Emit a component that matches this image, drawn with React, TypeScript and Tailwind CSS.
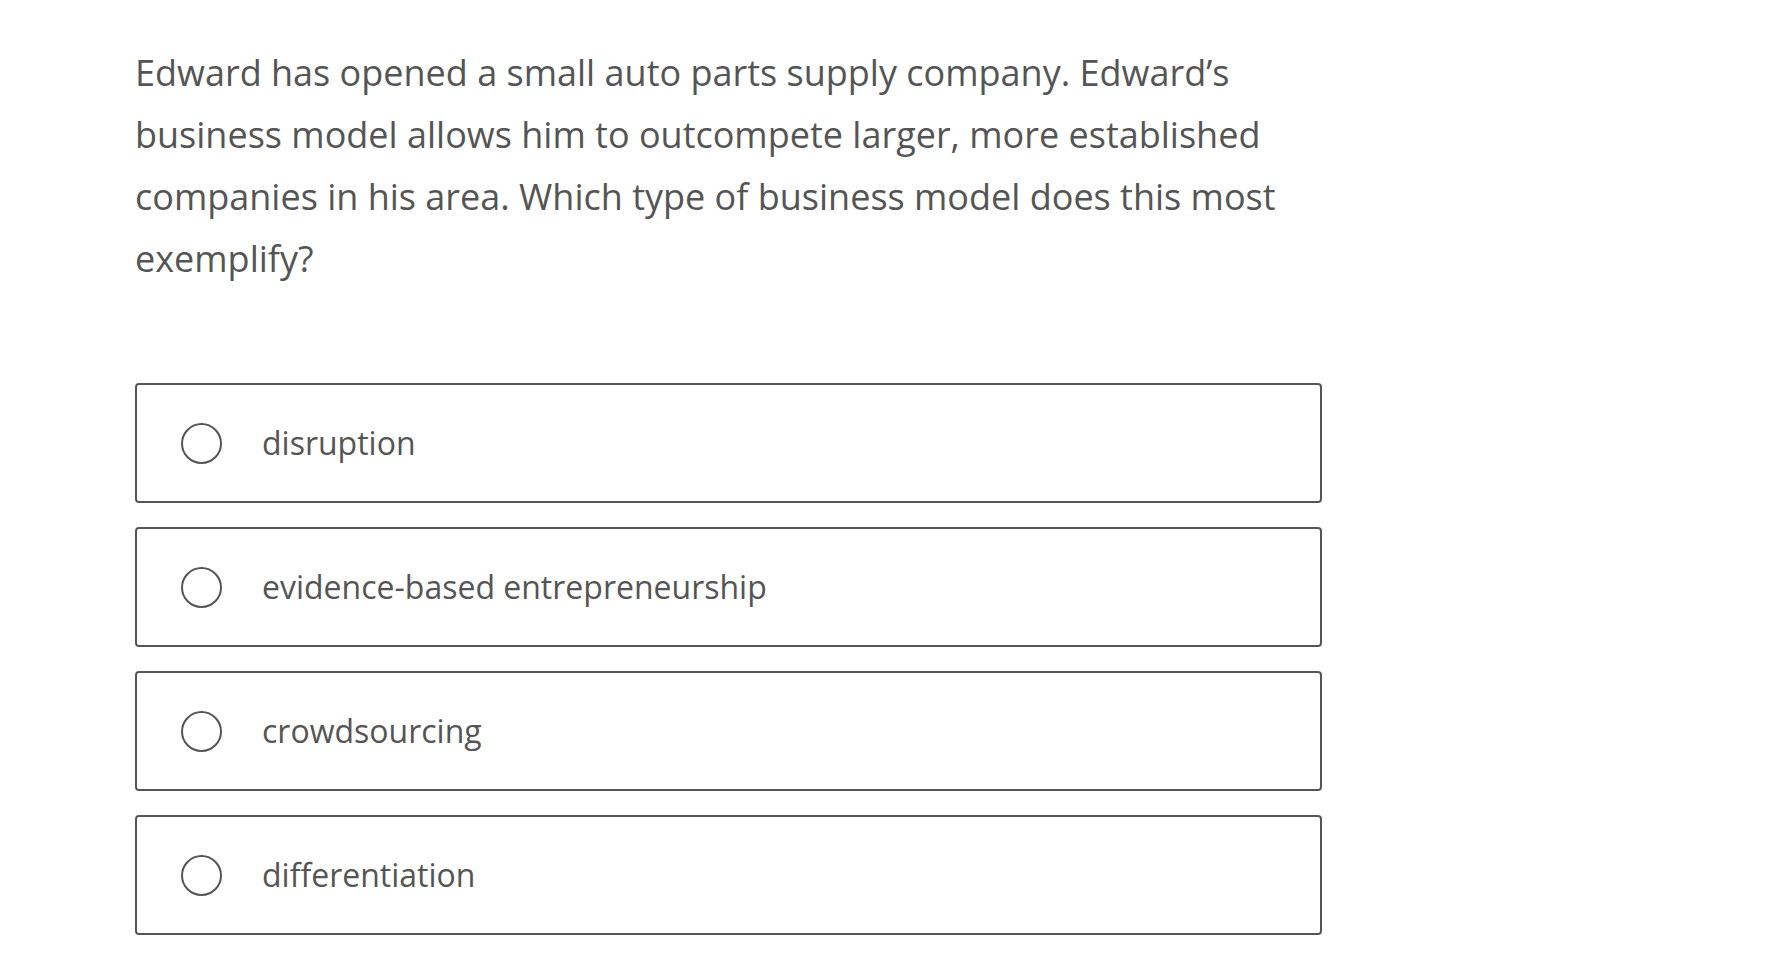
import React from 'react';

const options = [
  'disruption',
  'evidence-based entrepreneurship',
  'crowdsourcing',
  'differentiation',
];

export default function App() {
  return (
    <div className="min-h-screen w-full bg-white font-['Open_Sans',sans-serif] text-[#555]">
      <div className="pl-[135px] pt-[42px] w-[1322px]">
        <p className="text-[36px] leading-[62px]">
          Edward has opened a small auto parts supply company. Edward’s business model allows him to
          outcompete larger, more established companies in his area. Which type of business model does
          this most exemplify?
        </p>

        <div className="mt-[93px] flex flex-col gap-[24px]">
          {options.map((opt) => (
            <div
              key={opt}
              className="h-[120px] border-2 border-[#555] rounded-[4px] flex items-center pl-[44px]"
            >
              <span className="w-[41px] h-[41px] rounded-full border-2 border-[#555] shrink-0" />
              <span className="ml-[40px] text-[32px] leading-none">{opt}</span>
            </div>
          ))}
        </div>
      </div>
    </div>
  );
}
